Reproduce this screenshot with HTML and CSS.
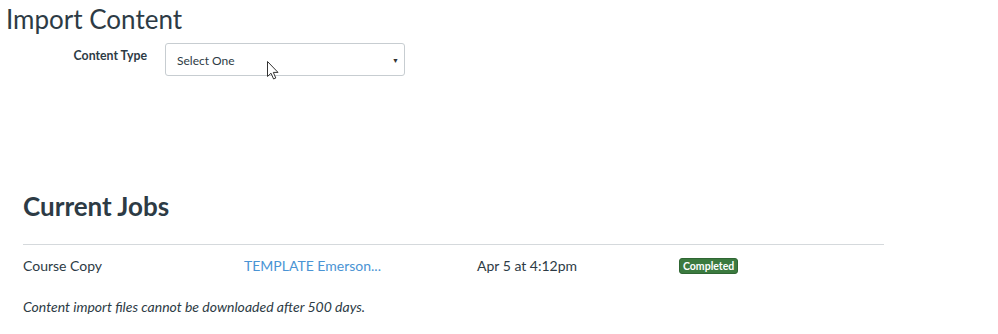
FILE: index.html
```html
<!DOCTYPE html>
<html>
<head>
<meta charset="utf-8">
<link rel="stylesheet" href="styles.css">
</head>
<body>
<div class="page">
  <h1 class="title">Import Content</h1>
  <div class="form-row">
    <label class="label">Content Type</label>
    <div class="select">
      <span class="select-text">Select One</span>
      <span class="caret">&#9660;</span>
      <svg class="cursor" width="12" height="19" viewBox="0 0 12 19"><path d="M0.5 0.5 L0.5 15.5 L4 12.2 L6.6 18 L8.8 17 L6.3 11.4 L11 11.4 Z" fill="#fff" stroke="#333" stroke-width="1"/></svg>
    </div>
  </div>
  <section class="jobs">
    <h2 class="jobs-title">Current Jobs</h2>
    <div class="job-row">
      <span class="col col-type">Course Copy</span>
      <a class="col col-name">TEMPLATE Emerson...</a>
      <span class="col col-date">Apr 5 at 4:12pm</span>
      <span class="col col-status"><span class="badge">Completed</span></span>
    </div>
    <p class="note">Content import files cannot be downloaded after 500 days.</p>
  </section>
</div>
</body>
</html>
```
FILE: styles.css
```css
html, body { margin: 0; padding: 0; background: #fff; }
body { font-family: Lato, "Liberation Sans", sans-serif; color: #2d3b45; }
.page { padding: 0 0 0 6px; }
.title { margin: 0; padding-top: 3px; font-size: 26px; font-weight: 400; line-height: 32px; color: #2d3b45; }
.form-row { display: flex; align-items: flex-start; margin-top: 8px; }
.label { width: 141px; text-align: right; font-size: 12.3px; font-weight: 700; padding-top: 5px; color: #2d3b45; }
.select { position: relative; margin-left: 18px; width: 238px; height: 31px; border: 1px solid #c7cdd1; border-radius: 3px; display: flex; align-items: center; }
.select-text { font-size: 12px; padding-left: 11px; flex: 1; color: #2d3b45; padding-top: 2px; }
.caret { font-size: 7px; margin-right: 5px; color: #333; }
.cursor { position: absolute; left: 101px; top: 17px; }
.jobs { margin-left: 17px; width: 861px; margin-top: 114px; }
.jobs-title { margin: 0; font-size: 26px; font-weight: 700; line-height: 32px; color: #2d3b45; }
.job-row { border-top: 1px solid #d5d9dc; margin-top: 22px; display: flex; align-items: center; height: 40px; font-size: 14px; }
.col { display: block; }
.col-type { width: 221px; }
.col-name { width: 233px; color: #4a94d4; text-decoration: none; }
.col-date { width: 202px; }
.badge { display: inline-block; background: #3b7a3f; color: #fff; font-size: 10.5px; font-weight: 700; padding: 1px 3px; border-radius: 3px; line-height: 12px; border: 1px solid #2f6633; }
.note { margin: 13px 0 0 0; font-size: 14px; font-style: italic; color: #2d3b45; }
```
